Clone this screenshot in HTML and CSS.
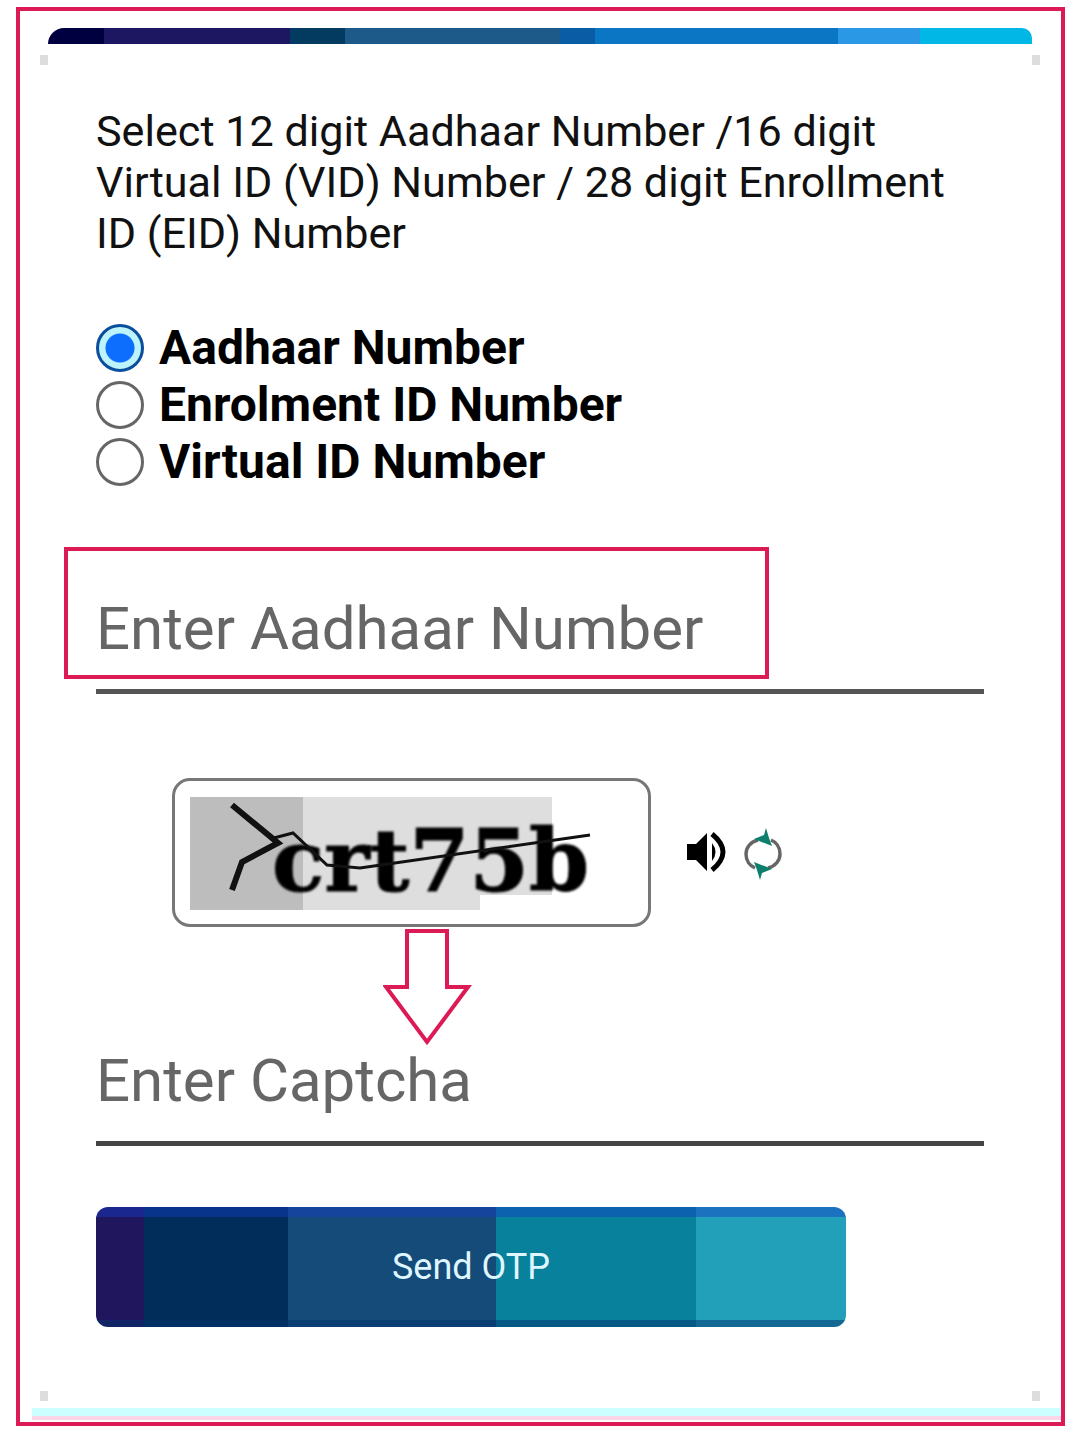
FILE: index.html
```html
<!DOCTYPE html>
<html lang="en">
<head>
<meta charset="UTF-8">
<meta name="viewport" content="width=device-width, initial-scale=1.0">
<title>Aadhaar Login</title>
<link rel="stylesheet" href="styles.css">
</head>
<body>
    <div class="frame">
        <div class="top-bar"></div>

        <div class="card">
            <p class="intro">Select 12 digit Aadhaar Number /16 digit Virtual ID (VID) Number / 28 digit Enrollment ID (EID) Number</p>

            <div class="radio-group">
                <label class="radio-row"><input type="radio" name="idType" checked> Aadhaar Number</label>
                <label class="radio-row"><input type="radio" name="idType"> Enrolment ID Number</label>
                <label class="radio-row"><input type="radio" name="idType"> Virtual ID Number</label>
            </div>

            <input class="field field-aadhaar" type="text" placeholder="Enter Aadhaar Number">

            <div class="captcha-row">
                <div class="captcha-box">
                    <div class="captcha-img">
                        <span class="captcha-text">crt75b</span>
                        <svg class="captcha-lines" viewBox="0 0 450 113">
                            <path d="M42 8 L88 46 L52 65 L42 93" fill="none" stroke="#111" stroke-width="6"/>
                            <path d="M80 42 L103 36 L137 68 L170 71 L400 38" fill="none" stroke="#111" stroke-width="3"/>
                        </svg>
                    </div>
                </div>
                <svg class="icon-sound" viewBox="0 0 42 42">
                    <path d="M0 13 H9 L20 2 V40 L9 29 H0 Z" fill="#000"/>
                    <path d="M25 12 Q32 21 25 30 Z" fill="#000"/>
                    <path d="M25 3 Q47 21 25 39" fill="none" stroke="#000" stroke-width="5"/>
                </svg>
                <svg class="icon-refresh" viewBox="0 0 38 52">
                    <path d="M14 12 C6 14 2 20 2 26 C2 33 6 38 11 40" fill="none" stroke="#666" stroke-width="3.5"/>
                    <path d="M24 40 C32 38 36 32 36 26 C36 19 32 14 27 12" fill="none" stroke="#666" stroke-width="3.5"/>
                    <path d="M22 0 L25 10 L28 18 L10 11 L20 7 Z" fill="#0f7f6d"/>
                    <path d="M16 52 L13 42 L10 34 L28 41 L18 45 Z" fill="#0f7f6d"/>
                </svg>
            </div>

            <input class="field field-captcha" type="text" placeholder="Enter Captcha">

            <button class="btn">Send OTP</button>
        </div>

        <div class="bottom-band"></div>

        <!-- markup drawn over the screenshot -->
        <div class="mark-box"></div>
        <svg class="mark-arrow" viewBox="0 0 90 120">
            <path d="M24 3 H64 V59 H85 L44 114 L3 59 H24 Z" fill="#fff" stroke="#dc1a55" stroke-width="4"/>
        </svg>
        <span class="dot dot-tl"></span>
        <span class="dot dot-tr"></span>
        <span class="dot dot-bl"></span>
        <span class="dot dot-br"></span>
    </div>
</body>
</html>
```

FILE: styles.css
```css
* {
    box-sizing: border-box;
}
body {
    margin: 0;
    padding: 7px 15px 13px 16px;
    height: 1439px;
    background: #fff;
    font-family: Roboto, sans-serif;
    color: #000;
}
.frame {
    position: relative;
    height: 1419px;
    border: 4px solid #dc1a55;
    padding-top: 17px;
    display: flex;
    flex-direction: column;
}
.top-bar {
    height: 16px;
    margin: 0 29px 0 28px;
    border-radius: 16px 10px 0 0;
    background: linear-gradient(90deg,
        #000040 0, #000040 56px,
        #1c1760 56px, #1c1760 242px,
        #033a60 242px, #033a60 297px,
        #1d5a8a 297px, #1d5a8a 512px,
        #0a5ca5 512px, #0a5ca5 547px,
        #0a76c4 547px, #0a76c4 790px,
        #2b98e6 790px, #2b98e6 872px,
        #00b7e6 872px);
}
.card {
    flex: 1;
    padding: 62px 0 0 76px;
    display: flex;
    flex-direction: column;
    align-items: flex-start;
}
.intro {
    margin: 0;
    width: 880px;
    font-size: 43.15px;
    line-height: 51px;
    color: #111;
}
.radio-group {
    margin-top: 60px;
}
.radio-row {
    display: flex;
    align-items: center;
    gap: 15px;
    height: 57px;
    font-size: 48px;
    font-weight: 700;
}
.radio-row input {
    appearance: none;
    margin: 0;
    width: 48px;
    height: 48px;
    border: 3px solid #666;
    border-radius: 50%;
    background: #fff;
}
.radio-row input:checked {
    border-color: #0a4f9e;
    background: radial-gradient(circle, #0d6efd 0, #0d6efd 14px, #bdf3fb 15px);
}
.field {
    display: block;
    width: 888px;
    padding: 0;
    border: none;
    border-bottom: 5px solid #555;
    outline: none;
    background: transparent;
    font-family: Roboto, sans-serif;
    font-size: 60px;
}
.field::placeholder {
    color: #666;
    opacity: 1;
}
.field-aadhaar {
    margin-top: 61px;
    height: 143px;
    padding-top: 17px;
}
.field-captcha {
    height: 126px;
    border-bottom-color: #444;
}
.captcha-row {
    display: flex;
    align-items: flex-start;
    margin: 84px 0 0 76px;
    height: 242px;
}
.captcha-box {
    width: 479px;
    height: 149px;
    padding: 16px 10px 14px 15px;
    border: 3px solid #777;
    border-radius: 18px;
}
.captcha-img {
    position: relative;
    width: 450px;
    height: 113px;
    background:
        linear-gradient(#fff, #fff) 290px 98px / 160px 15px no-repeat,
        linear-gradient(90deg, #bdbdbd 0, #bdbdbd 113px, #dedede 113px, #dedede 362px, #fff 362px);
}
.captcha-text {
    position: absolute;
    left: 82px;
    top: 14px;
    font-family: "DejaVu Serif", serif;
    font-size: 86px;
    font-weight: 700;
    line-height: 100px;
    color: #000;
    -webkit-text-stroke: 1px #000;
    filter: blur(1px);
}
.captcha-lines {
    position: absolute;
    left: 0;
    top: 0;
    width: 450px;
    height: 113px;
}
.icon-sound {
    width: 42px;
    height: 42px;
    margin: 53px 0 0 36px;
}
.icon-refresh {
    width: 38px;
    height: 52px;
    margin: 50px 0 0 15px;
}
.btn {
    margin-top: 61px;
    width: 750px;
    height: 120px;
    border: none;
    border-radius: 12px;
    color: #dff6ff;
    font-family: Roboto, sans-serif;
    font-size: 36px;
    background:
        linear-gradient(180deg, rgba(20, 60, 200, 0.45) 0, rgba(20, 60, 200, 0.45) 10px, transparent 10px),
        linear-gradient(0deg, rgba(0, 50, 110, 0.5) 0, rgba(0, 50, 110, 0.5) 7px, transparent 7px),
        linear-gradient(90deg,
            #20165e 0, #20165e 48px,
            #002d5a 48px, #002d5a 192px,
            #154b78 192px, #154b78 400px,
            #07819c 400px, #07819c 600px,
            #229fb9 600px);
}
.bottom-band {
    height: 12px;
    margin: 0 0 2px 12px;
    background: #ccffff;
    border-bottom: 4px solid #fbd5e6;
}
.mark-box {
    position: absolute;
    left: 44px;
    top: 536px;
    width: 705px;
    height: 132px;
    border: 4px solid #dc1a55;
}
.mark-arrow {
    position: absolute;
    left: 363px;
    top: 917px;
    width: 90px;
    height: 120px;
}
.dot {
    position: absolute;
    width: 8px;
    height: 10px;
    background: #ddd;
}
.dot-tl { left: 20px; top: 44px; }
.dot-tr { left: 1012px; top: 44px; }
.dot-bl { left: 20px; top: 1380px; }
.dot-br { left: 1012px; top: 1380px; }
```
